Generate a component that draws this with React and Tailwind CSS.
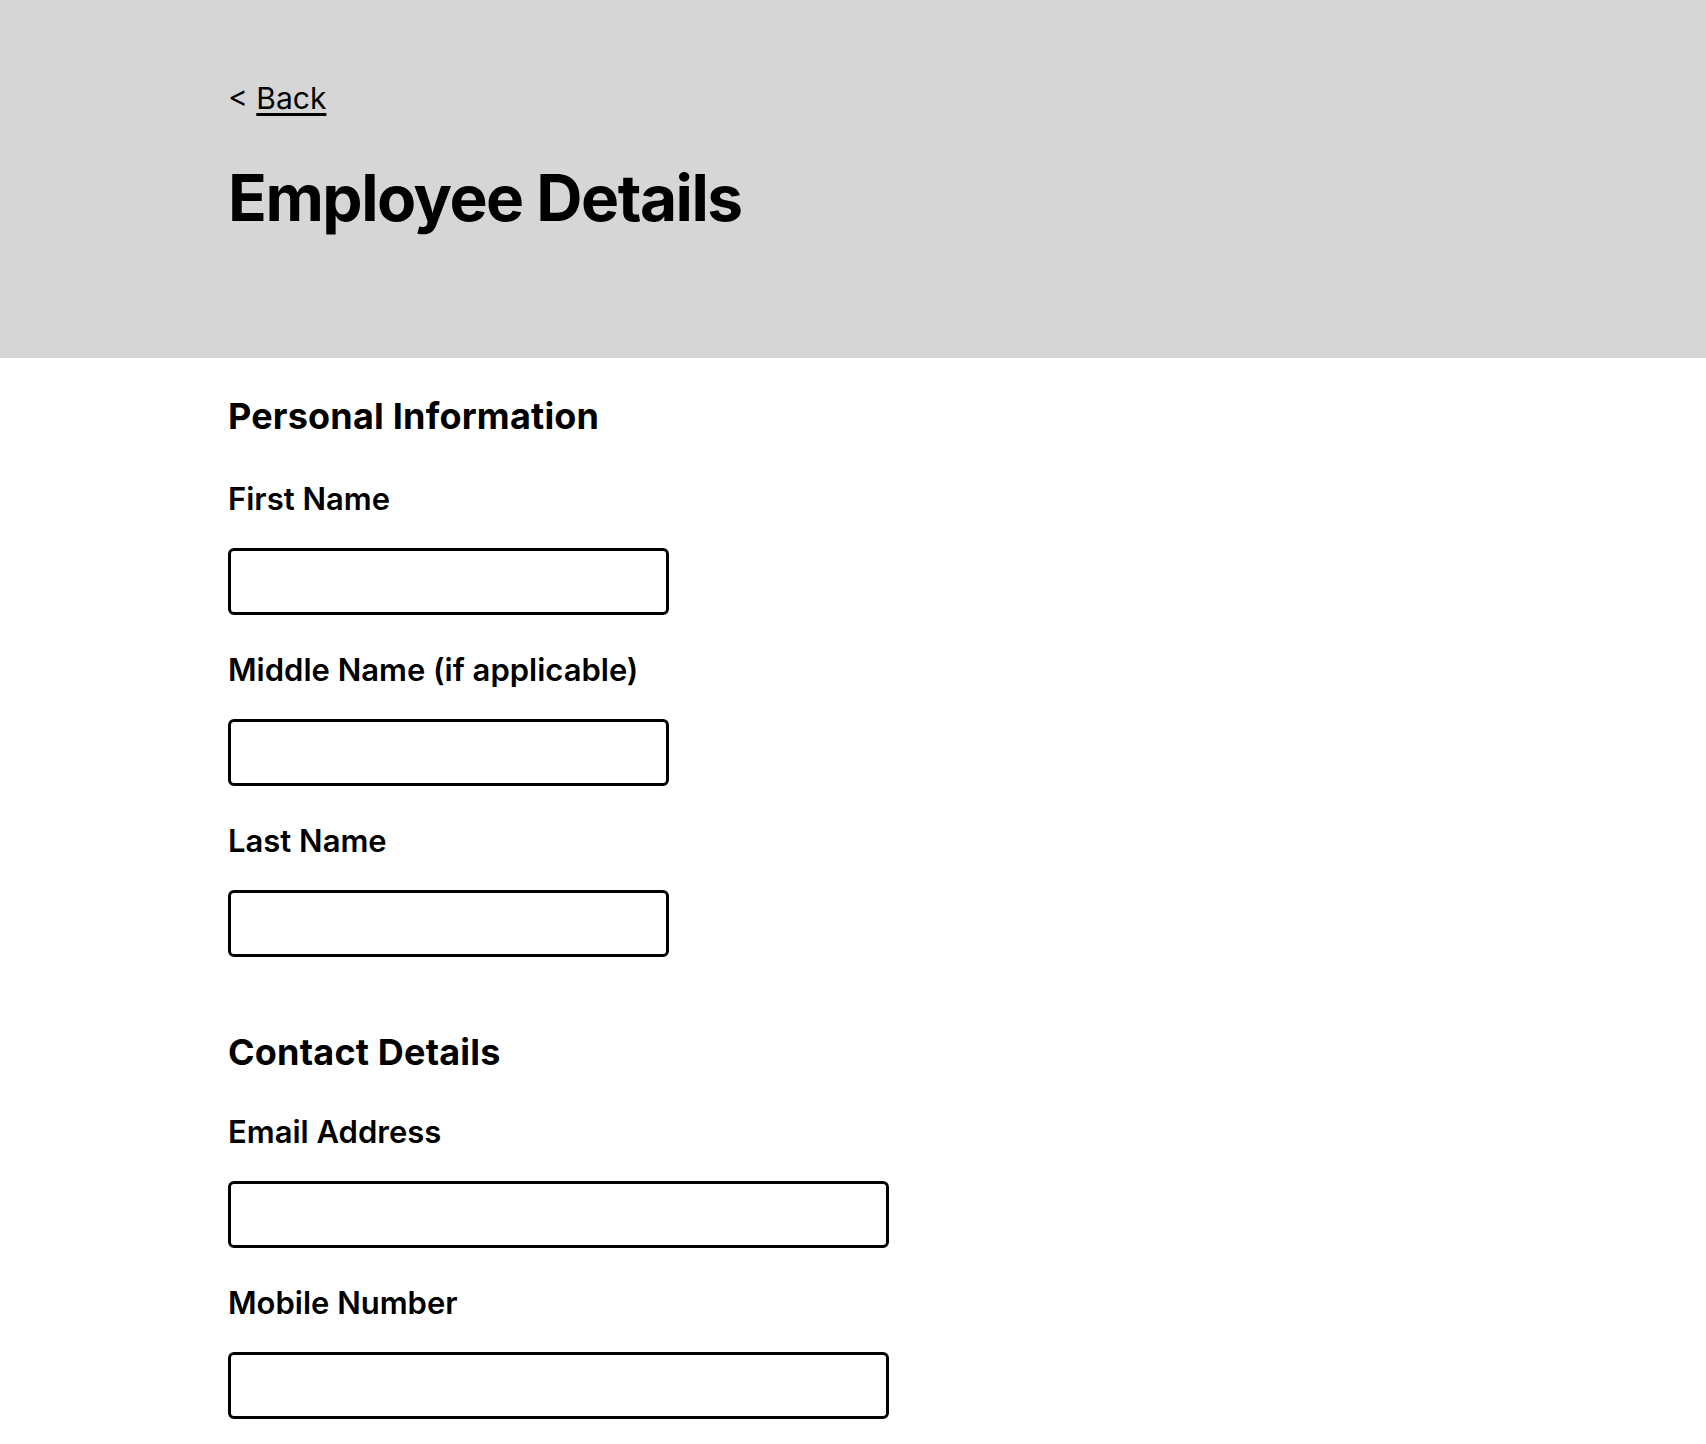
const PERSONAL = ['First Name', 'Middle Name (if applicable)', 'Last Name']
const CONTACT = ['Email Address', 'Mobile Number']

function Field({ label, wide }) {
  return (
    <div className="mb-[39px]">
      <label className="block text-[31px] leading-[31px] font-semibold text-black">{label}</label>
      <input
        type="text"
        className={`block mt-[34px] h-[67px] ${wide ? 'w-[661px]' : 'w-[441px]'} border-[3px] border-black rounded-[6px] bg-white px-3 text-[24px] outline-none`}
      />
    </div>
  )
}

export default function App() {
  return (
    <div className="min-h-screen bg-white text-black font-['Inter',_'Liberation_Sans',_sans-serif]">
      <header className="bg-[#d6d6d6] pl-[228px] pt-[83px] pb-[128px]">
        <a href="#" className="block text-[30px] leading-[30px] text-black">
          &lt; <span className="underline underline-offset-[4px]">Back</span>
        </a>
        <h1 className="mt-[53px] text-[64px] leading-[64px] font-bold tracking-[-1.5px]">Employee Details</h1>
      </header>

      <main className="pl-[228px] pt-[40px] pb-10">
        <section>
          <h2 className="text-[36px] leading-[36px] font-bold tracking-[0.2px] mb-[49px]">Personal Information</h2>
          {PERSONAL.map((l) => <Field key={l} label={l} />)}
        </section>

        <section className="mt-[77px]">
          <h2 className="text-[36px] leading-[36px] font-bold tracking-[0.2px] mb-[46px]">Contact Details</h2>
          {CONTACT.map((l) => <Field key={l} label={l} wide />)}
        </section>
      </main>
    </div>
  )
}
